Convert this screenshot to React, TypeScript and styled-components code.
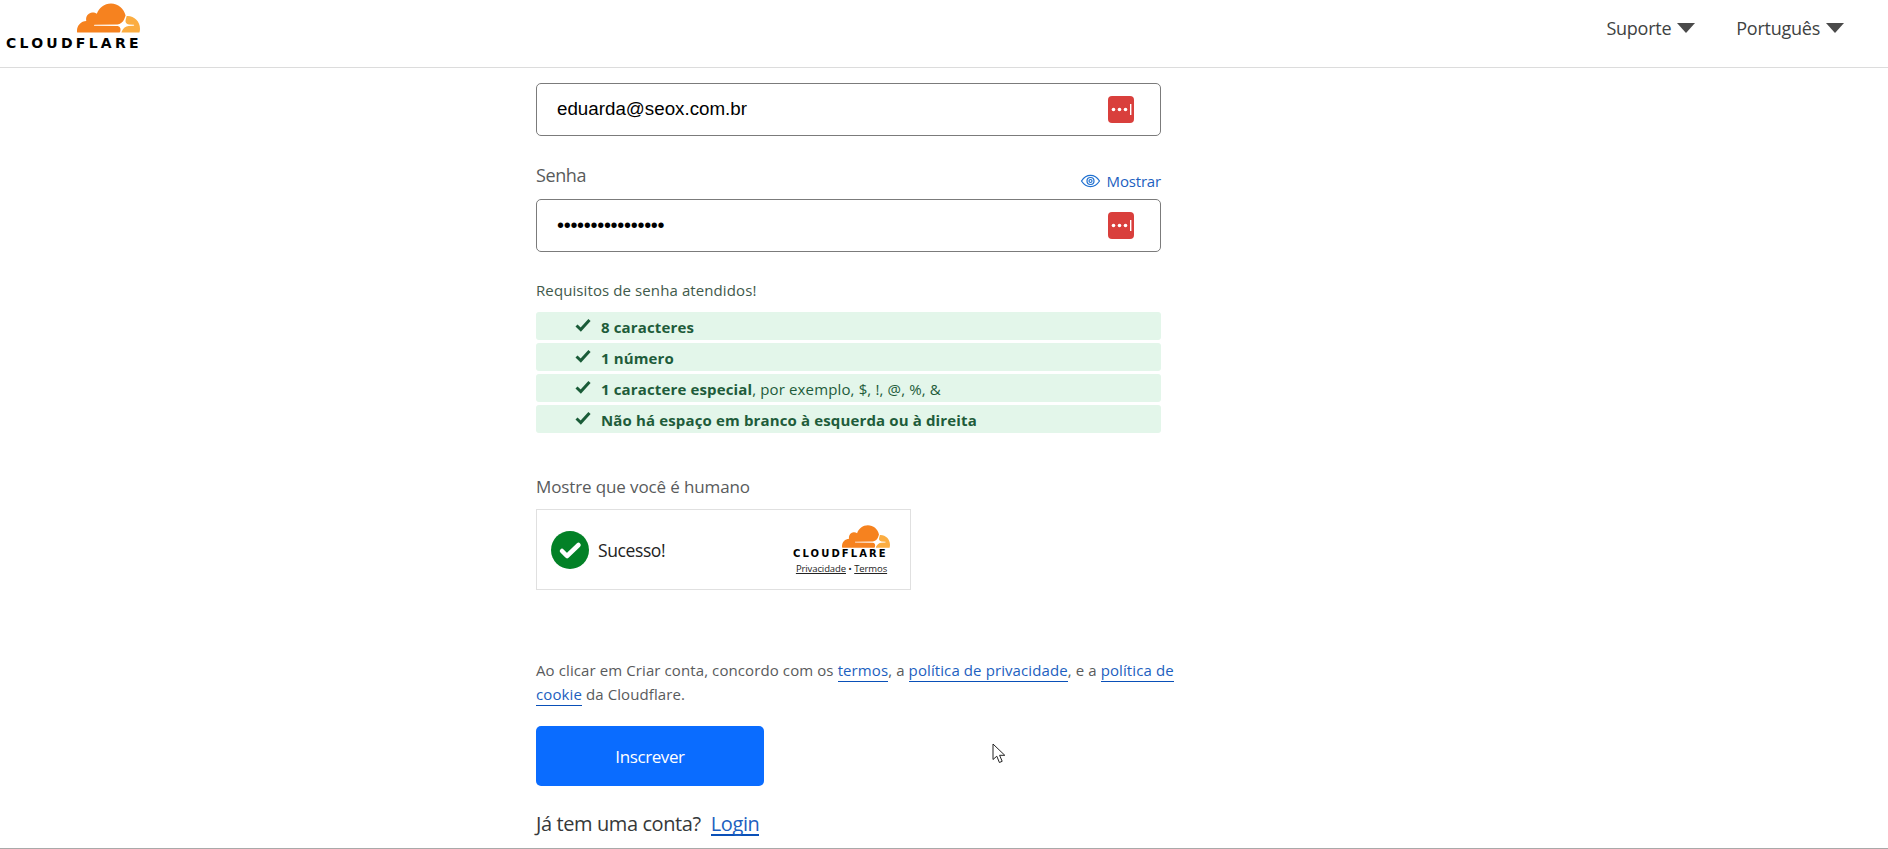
import React, { FC } from 'react';
import styled, { createGlobalStyle } from 'styled-components';

const GlobalStyle = createGlobalStyle`
    html, body {
        margin: 0;
        padding: 0;
        background: #fff;
        overflow: hidden;
    }
    * {
        box-sizing: border-box;
    }
`;

const uiFont = `'Open Sans', 'Noto Sans', sans-serif`;

const Page = styled.div`
    height: 849px;
    display: flex;
    flex-direction: column;
    border-bottom: 1px solid #a9a9a9;
    font-family: ${uiFont};
    color: #36393a;
    position: relative;
`;

const Header = styled.header`
    height: 68px;
    flex: none;
    display: flex;
    align-items: flex-start;
    justify-content: space-between;
    border-bottom: 1px solid #dcdcdc;
    padding: 3px 44px 0 6px;
`;

const Nav = styled.nav`
    display: flex;
    gap: 41px;
    padding-top: 12px;
`;

const NavItem = styled.a`
    display: flex;
    align-items: center;
    gap: 6px;
    font-size: 18px;
    letter-spacing: -0.25px;
    line-height: 26px;
    color: #404242;
`;

const Caret = styled.svg`
    width: 18px;
    height: 10px;
    fill: #4a4a4a;
`;

const LogoBox = styled.div<{ $small?: boolean }>`
    display: flex;
    flex-direction: column;
    align-items: flex-end;
    width: ${p => (p.$small ? '97px' : '134px')};
`;

const CloudMark = styled.svg<{ $small?: boolean }>`
    display: block;
    width: ${p => (p.$small ? '48px' : '63px')};
    height: ${p => (p.$small ? '23px' : '30px')};
    margin-bottom: ${p => (p.$small ? '0' : '1px')};
`;

const WordMark = styled.span<{ $small?: boolean }>`
    display: block;
    width: 100%;
    white-space: nowrap;
    font-family: 'DejaVu Sans', sans-serif;
    font-weight: 700;
    color: #000;
    font-size: ${p => (p.$small ? '10px' : '14px')};
    line-height: ${p => (p.$small ? '11px' : '15px')};
    letter-spacing: ${p => (p.$small ? '2.1px' : '3.25px')};
    margin-top: ${p => (p.$small ? '0' : '2px')};
`;

const Main = styled.main`
    flex: 1;
    padding: 15px 0 0 536px;
    width: 1176px;
`;

const FieldBox = styled.div`
    width: 625px;
    height: 53px;
    border: 1px solid #7b7b7b;
    border-radius: 5px;
    display: flex;
    align-items: center;
    justify-content: space-between;
    padding: 0 26px 0 20px;
    font-family: 'Liberation Sans', Arial, sans-serif;
    font-size: 18.75px;
    color: #000;
`;

const FieldValue = styled.span`
    padding-bottom: 2px;
`;

const Dots = styled.span`
    font-size: 20px;
    letter-spacing: -0.3px;
`;

const LabelRow = styled.div`
    width: 625px;
    height: 63px;
    padding-top: 26px;
    display: flex;
    justify-content: space-between;
`;

const FieldLabel = styled.label`
    font-size: 18px;
    line-height: 26px;
    letter-spacing: -0.4px;
    color: #595b5c;
`;

const ShowLink = styled.a`
    display: flex;
    align-items: center;
    gap: 6px;
    height: 24px;
    margin-top: 7px;
    font-size: 15px;
    letter-spacing: -0.17px;
    color: #1d5fc0;
`;

const Hint = styled.p`
    margin: 28px 0 0;
    font-size: 15px;
    line-height: 20px;
    letter-spacing: 0.1px;
    color: #3f5a4b;
`;

const Requirements = styled.ul`
    list-style: none;
    margin: 12px 0 0;
    padding: 0;
    width: 625px;
    display: flex;
    flex-direction: column;
    gap: 3px;
`;

const Requirement = styled.li`
    height: 28px;
    border-radius: 3px;
    background: #e3f6ea;
    display: flex;
    align-items: center;
    gap: 10px;
    padding-left: 39px;
    font-size: 15px;
    letter-spacing: 0.14px;
    color: #1e5c3a;
    b {
        font-weight: 700;
    }
    span {
        padding-top: 2px;
    }
`;

const CheckMark = styled.svg`
    width: 16px;
    height: 14px;
    flex: none;
    margin-top: -3px;
    fill: none;
    stroke: #1a5c38;
    stroke-width: 3;
`;

const HumanLabel = styled.p`
    margin: 41px 0 0;
    font-size: 17px;
    line-height: 26px;
    letter-spacing: -0.12px;
    color: #595b5c;
`;

const Turnstile = styled.div`
    margin-top: 9px;
    width: 375px;
    height: 81px;
    border: 1px solid #e0e0e0;
    display: flex;
    align-items: center;
    justify-content: space-between;
    padding: 0 20px 0 14px;
`;

const Verified = styled.div`
    display: flex;
    align-items: center;
    gap: 9px;
    font-size: 17.5px;
    letter-spacing: -0.4px;
    color: #232323;
`;

const WidgetBrand = styled.div`
    display: flex;
    flex-direction: column;
    align-items: center;
    width: 97px;
`;

const WidgetLinks = styled.div`
    margin-top: 4px;
    font-size: 9.5px;
    line-height: 12px;
    letter-spacing: -0.1px;
    color: #232323;
    white-space: nowrap;
    a {
        text-decoration: underline;
    }
`;

const Legal = styled.p`
    margin: 68px 0 0;
    width: 640px;
    font-size: 15px;
    line-height: 24px;
    letter-spacing: 0.1px;
    color: #595b5c;
`;

const InlineLink = styled.a`
    color: #1d5fc0;
    border-bottom: 1px solid #0a50b8;
    padding-bottom: 1px;
`;

const Submit = styled.button`
    display: block;
    margin-top: 20px;
    width: 228px;
    height: 60px;
    border: 0;
    border-radius: 5px;
    background: #0a6cff;
    color: #fff;
    font-family: ${uiFont};
    font-size: 17px;
    letter-spacing: -0.4px;
`;

const LoginRow = styled.div`
    margin: 26px 0 0;
    font-size: 20px;
    line-height: 24px;
    letter-spacing: -0.4px;
    color: #36393a;
    display: flex;
    align-items: flex-start;
    gap: 10px;
`;

const LoginLink = styled.a`
    display: block;
    height: 24px;
    color: #1d5fc0;
    border-bottom: 2px solid #0a50b8;
`;

const Pointer = styled.svg`
    position: absolute;
    left: 992px;
    top: 743px;
    width: 14px;
    height: 21px;
`;

const Cloud: FC<{ small?: boolean }> = ({ small }) => (
    <CloudMark $small={small} viewBox="0 6.4 24 11.2" preserveAspectRatio="none">
        <path
            fill="#f6821f"
            d="M16.5088 16.8447c.1475-.5068.0908-.9707-.1553-1.3154-.2246-.3164-.6045-.499-1.0615-.5205l-8.6592-.1123a.1559.1559 0 0 1-.1333-.0713c-.0283-.042-.0351-.0986-.021-.1553.0278-.084.1123-.1484.2036-.1562l8.7359-.1123c1.0351-.0489 2.1601-.8868 2.5537-1.9136l.499-1.3013c.0215-.0561.0293-.1128.0147-.168-.5625-2.5463-2.835-4.4453-5.5499-4.4453-2.5039 0-4.6284 1.6177-5.3876 3.8614-.4927-.3658-1.1187-.5625-1.794-.499-1.2026.119-2.1665 1.083-2.2861 2.2856-.0283.31-.0069.6128.0635.894C1.5683 13.171 0 14.7754 0 16.752c0 .1748.0142.3515.0352.5273.0141.083.0844.1475.1689.1475h15.9814c.0909 0 .1758-.0645.2032-.1553l.12-.4268z"
        />
        <path
            fill="#fbad41"
            d="M19.2656 11.2813c-.0771 0-.1611 0-.2383.0112-.0566 0-.1054.0415-.127.0976l-.3378 1.1744c-.1475.5068-.0918.9707.1543 1.3164.2256.3164.6055.498 1.0625.5195l1.8437.1133c.0557 0 .1055.0263.1329.0703.0283.043.0351.1074.0214.1562-.0283.084-.1132.1485-.204.1553l-1.921.1123c-1.041.0488-2.1582.8867-2.5527 1.914l-.1406.3585c-.0283.0713.0215.1416.0986.1416h6.5977c.0771 0 .1474-.0489.169-.126.1122-.4082.1757-.837.1757-1.2803 0-2.6025-2.125-4.727-4.7344-4.727z"
        />
    </CloudMark>
);

const ManagerIcon: FC = () => (
    <svg width="26" height="27" viewBox="0 0 26 27">
        <rect width="26" height="27" rx="4" fill="#d93f3c" />
        <circle cx="5.5" cy="13.5" r="1.8" fill="#fff" />
        <circle cx="11.5" cy="13.5" r="1.8" fill="#fff" />
        <circle cx="17.5" cy="13.5" r="1.8" fill="#fff" />
        <rect x="22" y="8" width="1.4" height="11" fill="#fff" />
    </svg>
);

const EyeIcon: FC = () => (
    <svg width="21" height="14" viewBox="0 0 20 14" fill="none" stroke="#1d6fd0" strokeWidth="1.2">
        <path d="M1 7c2.4-3.7 5.4-5.6 9-5.6S16.600 3.300 19 7c-2.400 3.700-5.400 5.600-9 5.600S3.400 10.700 1 7z" />
        <circle cx="10" cy="7" r="3.500" />
        <circle cx="10" cy="7" r="1.500" />
    </svg>
);

const Check: FC = () => (
    <CheckMark viewBox="0 0 16 14">
        <path d="M1.500 7.500 5.800 11.500 14.500 2" />
    </CheckMark>
);

const requirements = [
    { bold: '8 caracteres' },
    { bold: '1 número' },
    { bold: '1 caractere especial', rest: ', por exemplo, $, !, @, %, &' },
    { bold: 'Não há espaço em branco à esquerda ou à direita' },
];

export default function App() {
    return (
        <Page>
            <GlobalStyle />
            <Header>
                <LogoBox>
                    <Cloud />
                    <WordMark>CLOUDFLARE</WordMark>
                </LogoBox>
                <Nav>
                    <NavItem>
                        Suporte
                        <Caret viewBox="0 0 18 10"><path d="M0 0h18L9 10z" /></Caret>
                    </NavItem>
                    <NavItem>
                        Português
                        <Caret viewBox="0 0 18 10"><path d="M0 0h18L9 10z" /></Caret>
                    </NavItem>
                </Nav>
            </Header>
            <Main>
                <FieldBox>
                    <FieldValue>eduarda@seox.com.br</FieldValue>
                    <ManagerIcon />
                </FieldBox>
                <LabelRow>
                    <FieldLabel>Senha</FieldLabel>
                    <ShowLink><EyeIcon />Mostrar</ShowLink>
                </LabelRow>
                <FieldBox>
                    <Dots>••••••••••••••••</Dots>
                    <ManagerIcon />
                </FieldBox>
                <Hint>Requisitos de senha atendidos!</Hint>
                <Requirements>
                    {requirements.map(r => (
                        <Requirement key={r.bold}>
                            <Check />
                            <span><b>{r.bold}</b>{r.rest}</span>
                        </Requirement>
                    ))}
                </Requirements>
                <HumanLabel>Mostre que você é humano</HumanLabel>
                <Turnstile>
                    <Verified>
                        <svg width="38" height="38" viewBox="0 0 38 38">
                            <circle cx="19" cy="19" r="19" fill="#038127" />
                            <path d="M11 20 16 25 27.500 14" fill="none" stroke="#fff" strokeWidth="4.500" strokeLinecap="round" strokeLinejoin="round" />
                        </svg>
                        Sucesso!
                    </Verified>
                    <WidgetBrand>
                        <LogoBox $small>
                            <Cloud small />
                            <WordMark $small>CLOUDFLARE</WordMark>
                        </LogoBox>
                        <WidgetLinks><a>Privacidade</a> • <a>Termos</a></WidgetLinks>
                    </WidgetBrand>
                </Turnstile>
                <Legal>
                    Ao clicar em Criar conta, concordo com os <InlineLink>termos</InlineLink>, a{' '}
                    <InlineLink>política de privacidade</InlineLink>, e a <InlineLink>política de cookie</InlineLink> da
                    Cloudflare.
                </Legal>
                <Submit>Inscrever</Submit>
                <LoginRow>
                    Já tem uma conta?
                    <LoginLink>Login</LoginLink>
                </LoginRow>
            </Main>
            <Pointer viewBox="0 0 14 21">
                <path d="M1 1v15.500l3.800-3.300 2.600 6.300 2.800-1.200-2.600-6h5.200z" fill="#fff" stroke="#222" strokeWidth="1" />
            </Pointer>
        </Page>
    );
}
